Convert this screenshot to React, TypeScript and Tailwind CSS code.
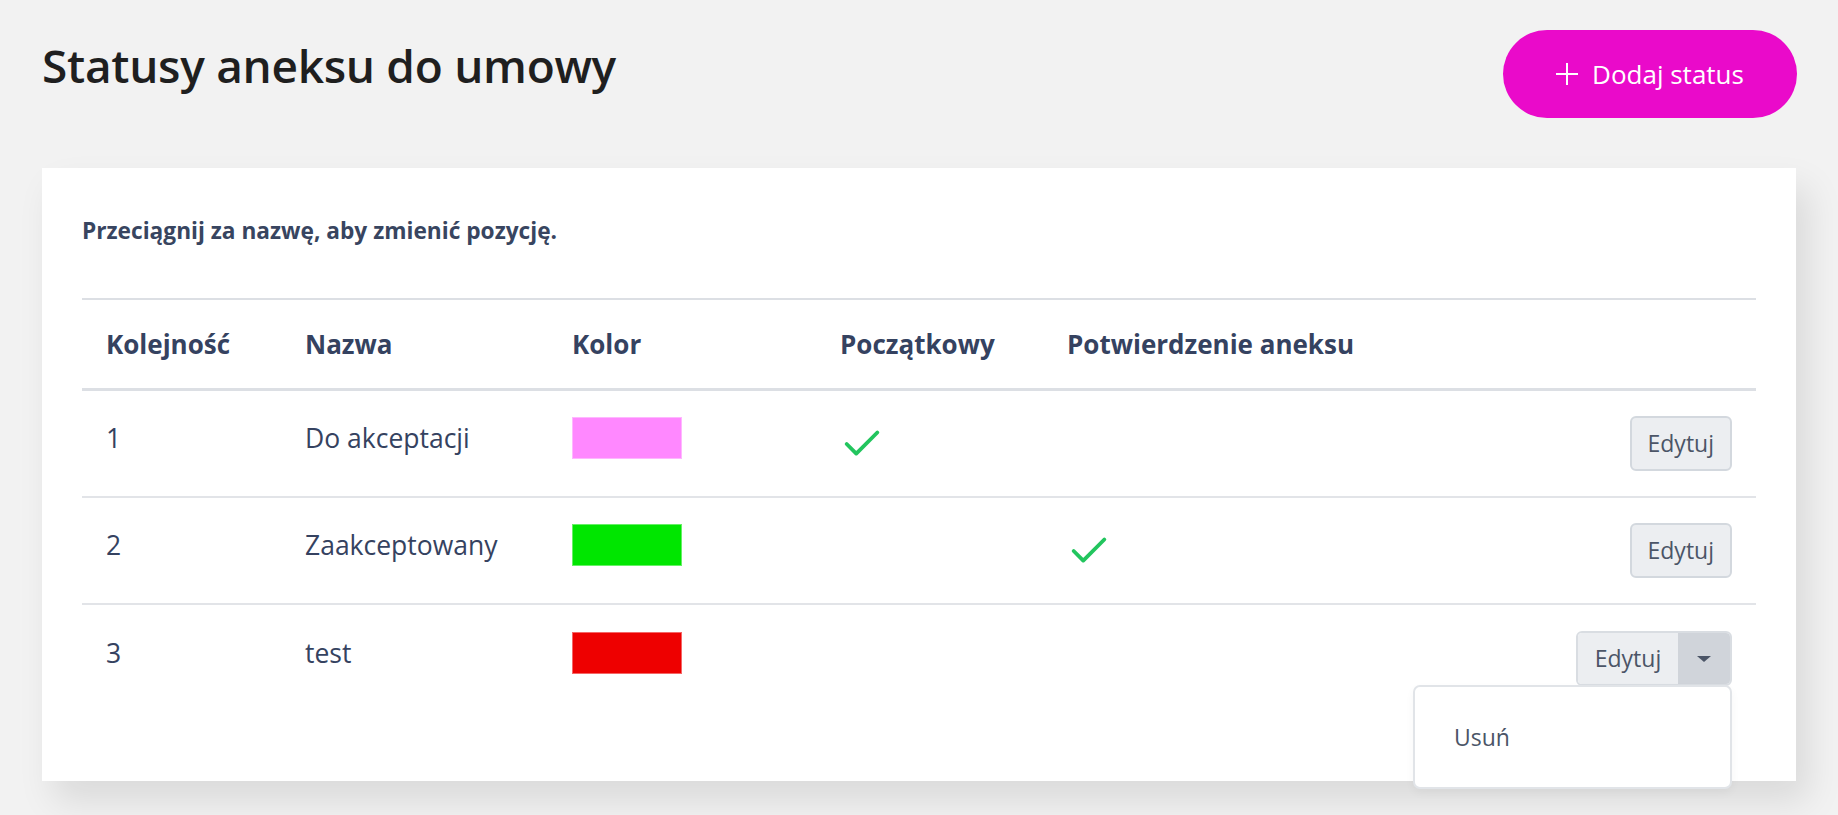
import { Check } from "lucide-react";

type Row = {
  order: number;
  name: string;
  color: string;
  initial: boolean;
  confirms: boolean;
  menuOpen?: boolean;
};

const rows: Row[] = [
  { order: 1, name: "Do akceptacji", color: "#ff88ff", initial: true, confirms: false },
  { order: 2, name: "Zaakceptowany", color: "#00e600", initial: false, confirms: true },
  { order: 3, name: "test", color: "#ee0000", initial: false, confirms: false, menuOpen: true },
];

const grid = "grid grid-cols-[199px_267px_268px_227px_1fr_auto] items-center";

function EditButton({ split }: { split?: boolean }) {
  if (!split) {
    return (
      <button className="h-[55px] rounded-[6px] border-2 border-[#d3d8de] bg-[#eceef1] px-[16px] text-[23px] text-[#4b5567]">
        Edytuj
      </button>
    );
  }
  return (
    <div className="relative">
      <div className="flex h-[55px] overflow-hidden rounded-[6px] border-2 border-[#d9dde2]">
        <button className="w-[100px] bg-[#eceef1] text-[23px] text-[#4b5567]">Edytuj</button>
        <button className="flex w-[52px] items-center justify-center bg-[#d0d4da]">
          <span className="block h-0 w-0 border-x-[7px] border-t-[6px] border-x-transparent border-t-[#4b5567]" />
        </button>
      </div>
      <div className="absolute right-0 top-[54px] z-10 w-[319px] rounded-[7px] border-2 border-[#e1e4e8] bg-white py-[30px] pl-[39px] shadow-[0_4px_10px_rgba(0,0,0,0.04)]">
        <span className="text-[23px] text-[#4b5567]">Usuń</span>
      </div>
    </div>
  );
}

export default function App() {
  return (
    <div className="min-h-screen bg-[#f2f2f2] px-[42px] pt-[30px] font-['Open_Sans',sans-serif]">
      <div className="flex items-start justify-between">
        <h1 className="mt-[1px] text-[46px] font-semibold tracking-[-0.3px] text-[#1f1f1f]">
          Statusy aneksu do umowy
        </h1>
        <button className="mr-[-1px] flex h-[88px] w-[294px] items-center justify-center gap-[14px] rounded-full bg-[#ea0aca] text-[26px] text-white">
          <svg width="22" height="22" viewBox="0 0 22 22" fill="none" stroke="white" strokeWidth="2">
            <path d="M11 0v22M0 11h22" />
          </svg>
          <span>Dodaj status</span>
        </button>
      </div>

      <div className="mt-[50px] bg-white px-[40px] pb-[69px] pt-[46px] shadow-[12px_20px_34px_rgba(0,0,0,0.1)]">
        <p className="text-[22.7px] font-bold text-[#384560]">Przeciągnij za nazwę, aby zmienić pozycję.</p>

        <div className="mt-[50px]">
          <div className={`${grid} h-[93px] border-y-2 border-b-[3px] border-[#dcdfe4] text-[26px] font-bold text-[#354260]`}>
            <div className="px-6">Kolejność</div>
            <div className="px-6">Nazwa</div>
            <div className="px-6">Kolor</div>
            <div className="px-6">Początkowy</div>
            <div className="px-6">Potwierdzenie aneksu</div>
            <div className="px-6" />
          </div>

          {rows.map((row, i) => (
            <div
              key={row.order}
              className={`${grid} h-[107px] text-[26.5px] text-[#354260] ${i < rows.length - 1 ? "border-b-2 border-[#e2e4e8]" : ""}`}
            >
              <div className="px-6 pb-[10px]">{row.order}</div>
              <div className="px-6 pb-[10px]">{row.name}</div>
              <div className="px-6">
                <div
                  className="mb-3 h-[42px] w-[110px] border border-white/40"
                  style={{ backgroundColor: row.color }}
                />
              </div>
              <div className="px-6">
                {row.initial ? <Check size={46} strokeWidth={2} className="-ml-[1px] text-[#22c55e]" /> : null}
              </div>
              <div className="px-6">
                {row.confirms ? <Check size={46} strokeWidth={2} className="-ml-[1px] text-[#22c55e]" /> : null}
              </div>
              <div className="flex justify-end px-6">
                <EditButton split={row.menuOpen} />
              </div>
            </div>
          ))}
        </div>
      </div>
    </div>
  );
}
